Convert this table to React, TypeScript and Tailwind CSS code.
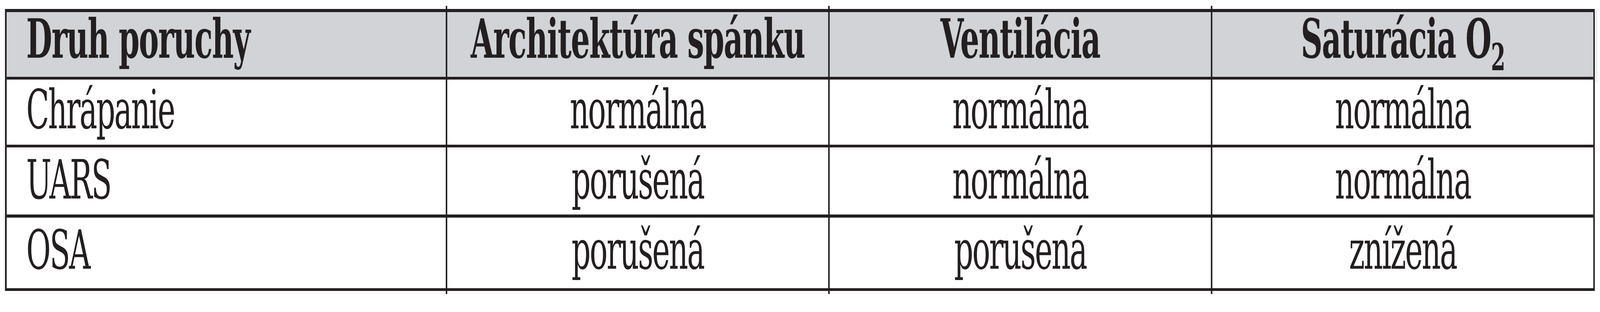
import { useEffect, useState } from 'react';

const rows = [
  { name: 'Chrápanie', arch: 'normálna', vent: 'normálna', sat: 'normálna', h: 'h-[174px]', pt: 'pt-[9px]', line: 'border-b-[7px]' },
  { name: 'UARS', arch: 'porušená', vent: 'normálna', sat: 'normálna', h: 'h-[180px]', pt: 'pt-[15px]', line: 'border-b-[8px]' },
  { name: 'OSA', arch: 'porušená', vent: 'porušená', sat: 'znížená', h: 'h-[181px]', pt: 'pt-[15px]', line: '' },
];

const DESIGN_W = 7380;

// small stubs where the column rules stick out above / below the table
const Stubs = () => (
  <div className="flex h-[8px]">
    <div className="w-[2033px]" />
    <div className="w-[7px] bg-[#231f20]" />
    <div className="w-[1757px]" />
    <div className="w-[7px] bg-[#231f20]" />
    <div className="w-[1758px]" />
    <div className="w-[7px] bg-[#231f20]" />
  </div>
);

export default function App() {
  // the browser may be narrower than the 7380px design: squeeze the sheet to the window width
  const [sx, setSx] = useState(() => Math.min(1, window.innerWidth / DESIGN_W));
  useEffect(() => {
    const onResize = () => setSx(Math.min(1, window.innerWidth / DESIGN_W));
    window.addEventListener('resize', onResize);
    return () => window.removeEventListener('resize', onResize);
  }, []);

  return (
    <div className="w-full h-[800px] overflow-hidden bg-white">
      <div
        className="w-[7380px] h-[800px] bg-white pt-[15px] pl-[23px] font-['DejaVu_Serif',serif] text-[#231f20] text-[138px] leading-none"
        style={{ transform: `scaleX(${sx})`, transformOrigin: 'left top' }}
      >
        <Stubs />

        <div className="flex">
          <div className="w-[7333px] border-t-[8px] border-b-[7px] border-l-[8px] border-r-[7px] border-[#231f20]">
            {/* header */}
            <div className="flex h-[173px] border-b-[7px] border-[#231f20] bg-[#d1d3d6] font-bold tracking-[-3px] whitespace-nowrap">
              <div className="w-[2025px] pl-[90px]">Druh poruchy</div>
              <div className="w-[1764px] border-l-[7px] border-[#231f20] text-center">Architektúra spánku</div>
              <div className="w-[1765px] border-l-[7px] border-[#231f20] text-center">Ventilácia</div>
              <div className="w-[1764px] border-l-[7px] border-[#231f20] text-center">
                Saturácia O<span className="text-[96px] align-[-32px]">2</span>
              </div>
            </div>

            {/* body */}
            {rows.map((r) => (
              <div key={r.name} className={`flex ${r.h} ${r.line} border-[#231f20] tracking-[-5px] whitespace-nowrap`}>
                <div className={`w-[2025px] pl-[90px] ${r.pt}`}>{r.name}</div>
                <div className={`w-[1764px] border-l-[7px] border-[#231f20] text-center ${r.pt}`}>{r.arch}</div>
                <div className={`w-[1765px] border-l-[7px] border-[#231f20] text-center ${r.pt}`}>{r.vent}</div>
                <div className={`w-[1764px] border-l-[7px] border-[#231f20] text-center ${r.pt}`}>{r.sat}</div>
              </div>
            ))}
          </div>
          {/* faint grey bleed of the header shading past the right rule */}
          <div className="ml-[7px] w-[4px] h-[189px] bg-[#e4e5e7]" />
        </div>

        <Stubs />
      </div>
    </div>
  );
}
